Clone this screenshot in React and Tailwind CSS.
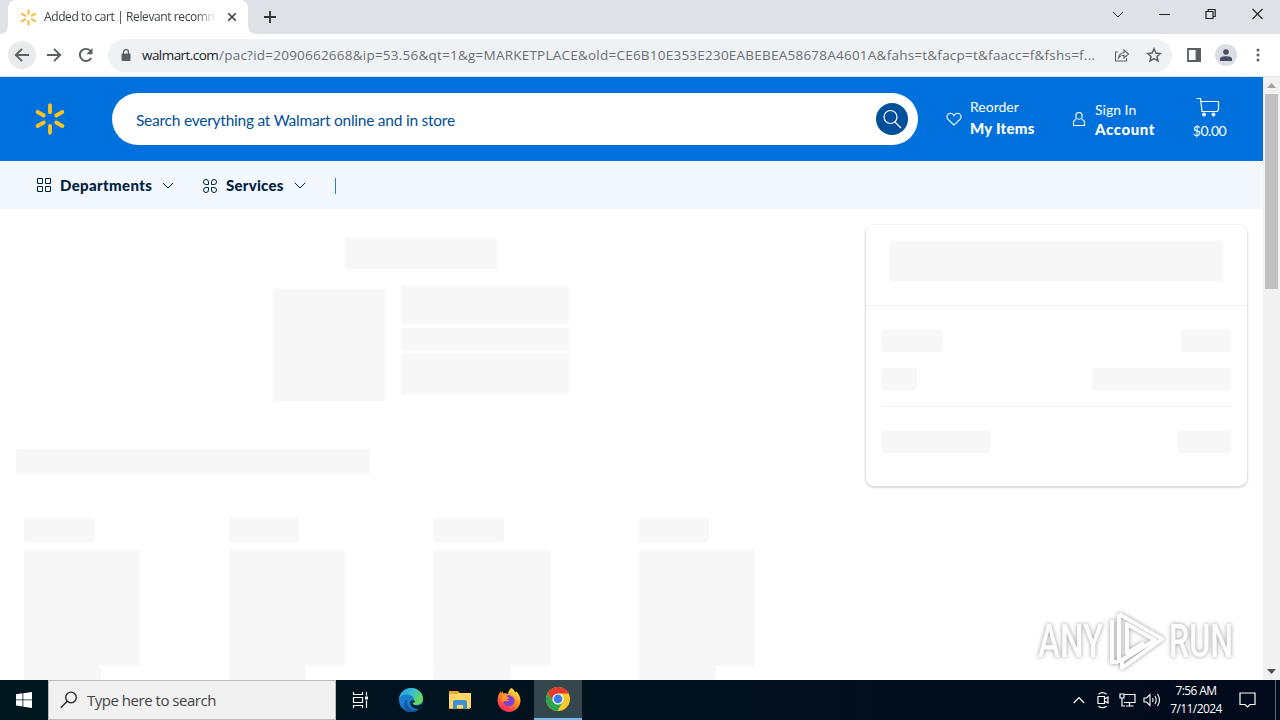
import clsx from "clsx";

const products = [1, 2, 3, 4];

const Skeleton = ({ className }) => <div className={clsx("bg-[#f7f7f7] rounded-[2px] shrink-0", className)} />;

const Spark = ({ size, color, className }) => (
    <svg width={size} height={size} viewBox="0 0 32 32" className={className} stroke={color} strokeWidth="3.8" strokeLinecap="round">
        <path d="M16 2.2v7M16 22.8v7M3.6 9l6.2 3.5M28.4 9l-6.2 3.5M3.6 23l6.2-3.5M28.4 23l-6.2-3.5" />
    </svg>
);

const ChevronDown = ({ className }) => (
    <svg width="12" height="8" viewBox="0 0 12 8" fill="none" stroke="currentColor" className={className}>
        <path d="M1 1l5 5 5-5" />
    </svg>
);

const TabStrip = () => (
    <div className="h-[34px] bg-[#dee1e6] flex shrink-0">
        <div className="flex items-end w-2 bg-white shrink-0">
            <div className="w-2 h-full bg-[#dee1e6] rounded-br-lg" />
        </div>
        <div className="w-60 h-full bg-white rounded-t-lg flex items-center pl-3 shrink-0">
            <Spark size={17} color="#fbb83b" className="shrink-0" />
            <div className="ml-[7px] w-[172px] whitespace-nowrap text-[12px] leading-4 text-[#3c4043] tracking-[-0.4px] mask-r-from-88%">
                Added to cart | Relevant recomm
            </div>
            <svg width="10" height="10" viewBox="0 0 10 10" stroke="#3c4043" strokeWidth="1.6" className="ml-[11px] shrink-0">
                <path d="M1.2 1.2l7.6 7.6M8.8 1.2L1.2 8.8" />
            </svg>
        </div>
        <div className="flex w-2 bg-white shrink-0">
            <div className="w-2 h-full bg-[#dee1e6] rounded-bl-lg" />
        </div>
        <svg width="12" height="12" viewBox="0 0 12 12" stroke="#303336" strokeWidth="1.8" className="mt-[11px] ml-2">
            <path d="M6 0v12M0 6h12" />
        </svg>
        <div className="ml-auto flex pr-[17px] pt-2 text-[#202124]">
            <ChevronDown className="mt-[3px] mr-[35px]" />
            <svg width="11" height="12" viewBox="0 0 11 12" stroke="currentColor" className="mr-[35px]">
                <path d="M0 6.5h11" />
            </svg>
            <svg width="11" height="12" viewBox="0 0 11 12" fill="none" stroke="currentColor" strokeWidth="1.2" className="mr-9">
                <path d="M1 3.5h7v7H1zM3.2 3.5V1.5h7v7H8" />
            </svg>
            <svg width="11" height="12" viewBox="0 0 11 12" stroke="currentColor" strokeWidth="1.1">
                <path d="M.5 1l10 10M10.5 1l-10 10" />
            </svg>
        </div>
    </div>
);

const Toolbar = () => (
    <div className="h-[43px] bg-white flex items-center shrink-0 border-b border-[#dfe3e8] pl-2 text-[#5b5f63]">
        <div className="size-7 rounded-full bg-[#e9eaec] flex items-center justify-center">
            <svg width="16" height="14" viewBox="0 0 16 14" fill="none" stroke="currentColor" strokeWidth="1.9">
                <path d="M15 7H2M8 .8L1.8 7 8 13.2" />
            </svg>
        </div>
        <svg width="16" height="14" viewBox="0 0 16 14" fill="none" stroke="currentColor" strokeWidth="1.9" className="ml-[10px]">
            <path d="M1 7h13M8 .8L14.2 7 8 13.2" />
        </svg>
        <svg width="16" height="16" viewBox="0 0 16 16" fill="none" stroke="currentColor" strokeWidth="1.9" className="ml-4">
            <path d="M13.2 11A6.1 6.1 0 1 1 12.6 4" />
            <path d="M14.5 1v6.2H8.3z" fill="currentColor" stroke="none" />
        </svg>
        <div className="ml-[14px] w-[1064px] h-[33px] rounded-full bg-[#eff2f5] flex items-center pl-[13px]">
            <svg width="10" height="13" viewBox="0 0 10 13" className="shrink-0">
                <rect x="0.5" y="4.5" width="9" height="7.5" rx="1" fill="currentColor" />
                <path d="M2.5 5V3.2a2.5 2.5 0 0 1 5 0V5" fill="none" stroke="currentColor" strokeWidth="1.3" />
            </svg>
            <div className="ml-[11px] w-[960px] whitespace-nowrap text-[13.5px] text-[#6b6f73] flex">
                <span className="text-[#202124] w-[77px] tracking-[-0.55px]">walmart.com</span>
                <span className="tracking-[0.23px]">/pac?id=2090662668&ip=53.56&qt=1&g=MARKETPLACE&old=CE6B10E353E230EABEBEA58678A4601A&fahs=t&facp=t&faacc=f&fshs=f...</span>
            </div>
            <svg width="16" height="16" viewBox="0 0 16 16" fill="none" stroke="currentColor" strokeWidth="1.1" className="ml-3 shrink-0">
                <path d="M4 5H1.5v9h11v-3M4.500 11c.5-3.5 2.5-5.2 5.500-5.300V3l4.500 4L10 11V8.300c-2.300 0-4 .8-5.500 2.700z" />
            </svg>
            <svg width="16" height="16" viewBox="0 0 16 16" fill="none" stroke="currentColor" strokeWidth="1.5" className="ml-4 shrink-0">
                <path d="M8 1.8l1.9 4.2 4.5.5-3.400 3 1 4.500L8 11.700 4 14l1-4.500-3.400-3 4.500-.5z" />
            </svg>
        </div>
        <svg width="14" height="14" viewBox="0 0 14 14" className="ml-[15px]" fill="none" stroke="currentColor" strokeWidth="1.8">
            <path d="M1 1h12v12H1z" />
            <path d="M9.5 1H13v12H9.500z" fill="currentColor" />
        </svg>
        <div className="ml-[14px] size-[22px] rounded-full bg-[#dcdee5] flex items-center justify-center">
            <svg width="12" height="12" viewBox="0 0 12 12" fill="#474d61">
                <circle cx="6" cy="3" r="2.8" />
                <path d="M0 12V9.800C0 6.500 12 6.500 12 9.800V12z" />
            </svg>
        </div>
        <svg width="4" height="14" viewBox="0 0 4 14" fill="currentColor" className="ml-[19px]">
            <circle cx="2" cy="2" r="1.5" />
            <circle cx="2" cy="7" r="1.5" />
            <circle cx="2" cy="12" r="1.5" />
        </svg>
    </div>
);

const Header = () => (
    <header className="h-[84px] bg-[#0071dc] flex items-center shrink-0 pl-[34px] font-[Lato,sans-serif] text-white">
        <Spark size={32} color="#ffc220" />
        <div className="ml-[46px] w-[806px] h-[52px] rounded-full bg-white flex items-center justify-between pl-6 pr-[10px] text-[#004f9a]">
            <span className="text-[15.5px] tracking-[-0.24px] whitespace-nowrap mt-[3px]">Search everything at Walmart online and in store</span>
            <div className="size-8 rounded-full bg-[#004f9a] text-white flex items-center justify-center">
                <svg width="20" height="20" viewBox="0 0 20 20" fill="none" stroke="currentColor" strokeWidth="1.2">
                    <circle cx="8.5" cy="8" r="6.5" />
                    <path d="M13 13l6 6" />
                </svg>
            </div>
        </div>
        <svg width="16" height="14" viewBox="0 0 16 14" fill="none" stroke="currentColor" strokeWidth="1.1" className="ml-7">
            <path d="M8 13L2.3 7.6C-.3 4.800 1.300 1.300 4.200 1.200 6 1.100 7.300 2.200 8 3.500c.7-1.300 2-2.400 3.800-2.300 2.900.1 4.500 3.600 1.900 6.400z" />
        </svg>
        <div className="ml-2 w-[102px] whitespace-nowrap">
            <div className="text-[14px] leading-[22px] -mt-1">Reorder</div>
            <div className="text-[15px] leading-5 font-black tracking-[0.25px]">My Items</div>
        </div>
        <svg width="14" height="16" viewBox="0 0 14 16" fill="none" stroke="currentColor" strokeWidth="1.1">
            <path d="M4 7V4q0-2.500 3-2.500T10 4v3q-1 1.200-3 1.200T4 7zM4 8.500q-2.500.5-2.500 3v3h11v-3q0-2.500-2.500-3" />
        </svg>
        <div className="ml-[9px] w-[96px] whitespace-nowrap">
            <div className="text-[14px] leading-5 -mt-px">Sign In</div>
            <div className="text-[15px] leading-[18px] font-black tracking-[0.6px]">Account</div>
        </div>
        <div className="w-[37px] flex flex-col items-center">
            <svg width="24" height="20" viewBox="0 0 24 20" fill="none" stroke="currentColor" strokeWidth="1.2" className="mr-1">
                <path d="M.5 1.500H4.500L6 14.500H21.500L22.500 12V4.500H5" />
                <circle cx="8" cy="17.500" r="1.300" fill="currentColor" />
                <circle cx="17.5" cy="17.500" r="1.300" fill="currentColor" />
            </svg>
            <div className="text-[14px] leading-5 mt-1 tracking-[-0.5px]">$0.00</div>
        </div>
    </header>
);

const SubNav = () => (
    <nav className="h-12 bg-[#f2f8fd] flex items-center shrink-0 pl-9 pt-px text-[#00203f] font-[Lato,sans-serif] text-[15px] font-black">
        <svg width="16" height="16" viewBox="0 0 16 16" fill="none" stroke="currentColor" className="-mt-px">
            <path d="M1.500 1.500h5v5h-5zM9.500 1.500h5v5h-5zM1.500 9.500h5v5h-5zM9.500 9.500h5v5h-5z" />
        </svg>
        <span className="ml-2 w-[102px] tracking-[0.35px]">Departments</span>
        <ChevronDown />
        <svg width="16" height="16" viewBox="0 0 16 16" fill="none" stroke="currentColor" className="ml-7">
            <path d="M6.500 6.500H4a2.500 2.500 0 1 1 2.500-2.500zM9.500 6.500V4A2.500 2.500 0 1 1 12 6.500zM6.500 9.500V12A2.500 2.500 0 1 1 4 9.500zM9.500 9.500H12A2.500 2.500 0 1 1 9.500 12z" />
        </svg>
        <span className="ml-2 w-[68px] tracking-[0.25px]">Services</span>
        <ChevronDown />
        <div className="ml-[29px] w-px h-4 mt-px bg-[#2a7fbf]" />
    </nav>
);

const ProductSkeleton = () => (
    <div className="w-[205px]">
        <Skeleton className="w-[70px] h-6" />
        <Skeleton className="w-[116px] h-[116px] mt-2" />
        <Skeleton className="w-[77px] h-6" />
    </div>
);

const OrderSummary = () => (
    <div className="w-[381px] h-[261px] mt-4 rounded-lg bg-white shrink-0 shadow-[0_1px_2px_1px_rgba(0,0,0,0.15)]">
        <div className="h-[81px] pt-4 pl-6 border-b border-[#efefef]">
            <Skeleton className="w-[333px] h-10" />
        </div>
        <div className="px-4 pt-6">
            <div className="flex justify-between">
                <Skeleton className="w-[60px] h-[22px]" />
                <Skeleton className="w-[50px] h-[22px]" />
            </div>
            <div className="flex justify-between mt-4 pb-4 border-b border-[#efefef]">
                <Skeleton className="w-[35px] h-[22px]" />
                <Skeleton className="w-[139px] h-[22px]" />
            </div>
            <div className="flex justify-between mt-6">
                <Skeleton className="w-[108px] h-[22px]" />
                <Skeleton className="w-[53px] h-[22px]" />
            </div>
        </div>
    </div>
);

const Watermark = () => (
    <div className="absolute left-[1038px] top-[609px] w-[200px] h-[64px] flex items-center text-[#fdfdfd] font-[Roboto,sans-serif] text-[46px] leading-[64px] font-medium drop-shadow-[0_0_2px_rgba(0,0,0,0.4)]">
        <div className="w-[69px]">
            <div className="origin-left scale-x-[0.72]">ANY</div>
        </div>
        <svg width="62" height="64" viewBox="0 0 62 64" fill="none" stroke="currentColor" strokeWidth="4" strokeLinejoin="round">
            <path d="M5 11v42h6M12 5v49M12 5l43 25L15 59V51l33-20L20 15v29l17-10" />
        </svg>
        <div className="w-[62px]">
            <div className="origin-left scale-x-[0.7] w-[92px]">RUN</div>
        </div>
    </div>
);

const Scrollbar = () => (
    <div className="w-[17px] bg-[#f1f1f1] shrink-0 flex flex-col items-center">
        <svg width="9" height="17" viewBox="0 0 9 17">
            <path d="M0 11l4.500-5L9 11z" fill="#a3a3a3" />
        </svg>
        <div className="w-[13px] h-[195px] bg-[#c1c1c1]" />
        <svg width="9" height="17" viewBox="0 0 9 17" className="mt-auto">
            <path d="M0 6l4.500 5L9 6z" fill="#505050" />
        </svg>
    </div>
);

const Edge = () => (
    <svg width="24" height="24" viewBox="0 0 24 24">
        <defs>
            <linearGradient id="edgeTop" x1="0" y1="0" x2="1" y2="0.5">
                <stop offset="0" stopColor="#2294df" />
                <stop offset="0.5" stopColor="#35bdd4" />
                <stop offset="1" stopColor="#68d956" />
            </linearGradient>
        </defs>
        <circle cx="12" cy="12" r="12" fill="#1680cf" />
        <path d="M0 11C1 4 6 0 12 0c7 0 12 5 12 10.500 0 4.500-3.500 6.300-6.700 6.300-2.300 0-3.800-.8-3.800-1.800 0-.8 1.500-1.500 1.500-3.500C15 8.500 11.500 6.500 7.500 6.500 4 6.500 1.500 8.200 0 11z" fill="url(#edgeTop)" />
        <path d="M8.500 11.500C6.500 18 12 23 19 21.700 16 24 12 24.500 9 23.600 3 21 3.500 13 8.500 11.500z" fill="#1555a3" />
        <path d="M13.500 14.500c-.8 3 4.500 4.200 8.500 1.800 1.500-.8 2.500-.5 2 .7-.5 2-1.500 3-3 4-6 1-11-3-9.500-7.500 1.200-1.500 4.500-1 4.500 0 0 1-.9 1-2.500 1z" fill="#03202d" />
    </svg>
);

const Folder = () => (
    <svg width="22" height="20" viewBox="0 0 22 20">
        <path d="M0 1h9l2 2h10v16H0z" fill="#e8a92e" />
        <path d="M0 4h8l2-1h12v15H0z" fill="#ffd766" />
        <path d="M4 19v-7q0-2 2-2h10q2 0 2 2v7h-4v-4H8v4z" fill="#3d92d1" />
    </svg>
);

const Firefox = () => (
    <svg width="24" height="24" viewBox="0 0 24 24">
        <defs>
            <linearGradient id="fox" x1="0.8" y1="0" x2="0.2" y2="1">
                <stop offset="0" stopColor="#fff04a" />
                <stop offset="0.45" stopColor="#ff8f1f" />
                <stop offset="1" stopColor="#f5156c" />
            </linearGradient>
        </defs>
        <path d="M14.500 0c2 1 3.200 3 3.500 4.500l1.500-1C22 6 23.500 9 23.500 12.500 23.500 19 18 24 12 24S.5 19 .5 12.500C.5 8 2 5.500 4 3v2.500l2-2.500v2.500c2-.8 4 0 5 .5.5-3 1.500-5 3.500-6z" fill="url(#fox)" />
        <path d="M9 8c4-2 9 1 8.500 5.500-.5 4-4.500 5.500-7.500 4.500-3-1-4.500-4-3-6 1 1.500 3 2 5.500.5-1.500-.5-3-1-4-2.500z" fill="#7b40d8" />
        <path d="M5 8c2.500-1 5 0 7 2-1 1.500-3 1-4 3l-3 1z" fill="#ff9a20" />
    </svg>
);

const Chrome = () => (
    <svg width="24" height="24" viewBox="0 0 24 24">
        <circle cx="12" cy="12" r="12" fill="#fcc92b" />
        <path d="M12 6.500h10.700A12 12 0 0 0 1.600 6l5.600 9z" fill="#e33b2e" />
        <path d="M1.600 6A12 12 0 0 0 11.500 24l5.300-9.200L12 17.500 7.200 14.800z" fill="#2da44e" />
        <circle cx="12" cy="12" r="5.6" fill="#fff" />
        <circle cx="12" cy="12" r="4.4" fill="#367de8" />
    </svg>
);

const Taskbar = () => (
    <div className="h-10 shrink-0 bg-linear-to-r from-[#001820] to-[#020a1c] flex items-center text-white">
        <div className="w-12 flex justify-center">
            <svg width="16" height="16" viewBox="0 0 16 16" fill="white">
                <path d="M0 2.300L6.500 1.300v6.200H0zM7.300 1.200L16 0v7.500H7.300zM0 8.300h6.500v6.200L0 13.600zM7.300 8.300H16V16l-8.700-1.300z" />
            </svg>
        </div>
        <div className="w-72 h-full bg-[#f1f1f1] border border-[#b9bcbe] flex items-center pl-[11px] text-[#444]">
            <svg width="18" height="18" viewBox="0 0 18 18" fill="none" stroke="#222" strokeWidth="1.3">
                <circle cx="11" cy="6.5" r="5.3" />
                <path d="M7.200 10.300L.8 16.700" />
            </svg>
            <span className="ml-[9px] text-[15px] tracking-[-0.48px]">Type here to search</span>
        </div>
        <div className="w-12 flex justify-center">
            <svg width="17" height="16" viewBox="0 0 17 16" fill="none" stroke="white" strokeWidth="1.2">
                <path d="M1.500 0v2.500h9V0M1.500 16v-2.500h9V16M1.500 5.500h9v5h-9zM14.500 0v3.500M14.500 8.500V16" />
                <path d="M13 4.500h3v3h-3z" fill="white" stroke="none" />
            </svg>
        </div>
        <div className="w-[54px] flex justify-center"><Edge /></div>
        <div className="w-11 flex justify-center"><Folder /></div>
        <div className="w-[54px] flex justify-center"><Firefox /></div>
        <div className="-ml-0.5 w-12 h-full bg-[#35474e] border-b-2 border-[#76b9ed] flex items-center justify-center"><Chrome /></div>
        <div className="ml-auto flex items-center">
            <svg width="12" height="8" viewBox="0 0 12 8" fill="none" stroke="white" strokeWidth="1.2">
                <path d="M.8 7L6 1.500 11.200 7" />
            </svg>
            <svg width="12" height="18" viewBox="0 0 12 18" fill="none" stroke="white" strokeWidth="1.2" className="ml-3">
                <path d="M1 5.500h6.500v7H1zM7.500 8L11 6v6L7.500 10M1.500 3.200q4-3 8 0M1.500 15.200q4 3 8 0" />
            </svg>
            <svg width="17" height="14" viewBox="0 0 17 14" fill="none" stroke="white" strokeWidth="1.2" className="ml-[10px]">
                <path d="M5 1.500h11v8H5M10.500 9.500V13M7 13h7.500M1 1h4v4H1zM3 5v8h3" />
            </svg>
            <svg width="18" height="14" viewBox="0 0 18 14" fill="none" stroke="white" strokeWidth="1.1" className="ml-[7px]">
                <path d="M1 5h2.500L7 1.500v11L3.500 9H1zM9.500 5q1.200 2 0 4M12 3q2.500 4 0 8M14.500 1q4 6 0 12" />
            </svg>
            <div className="w-[70px] text-center text-[12px] leading-[18px] tracking-[-0.6px]">
                <div>7:56 AM</div>
                <div>7/11/2024</div>
            </div>
            <svg width="17" height="16" viewBox="0 0 17 16" fill="none" stroke="white" strokeWidth="1.2" className="ml-2">
                <path d="M1 1h15v11.500h-5L8.500 15 6 12.500H1z" />
            </svg>
            <div className="ml-[19px] w-px h-10 bg-[#5a6270] mr-1" />
        </div>
    </div>
);

export default function App() {
    return (
        <div className="relative w-[1280px] h-[720px] overflow-hidden bg-white flex flex-col font-['Open_Sans',sans-serif]">
            <TabStrip />
            <Toolbar />
            <div className="flex h-[603px] overflow-hidden">
                <div className="w-[1263px] flex flex-col">
                    <Header />
                    <SubNav />
                    <main className="flex">
                        <div className="w-[866px] shrink-0 pt-[29px]">
                            <Skeleton className="ml-[345px] w-[152px] h-[31px]" />
                            <div className="ml-[273px] mt-[17px] flex gap-4">
                                <Skeleton className="size-28 mt-[3px]" />
                                <div className="space-y-1">
                                    <Skeleton className="w-[168px] h-[38px]" />
                                    <Skeleton className="w-[168px] h-[22px]" />
                                    <Skeleton className="w-[168px] h-10" />
                                </div>
                            </div>
                            <Skeleton className="ml-4 mt-12 w-[354px] h-[25px]" />
                            <div className="flex pl-6 mt-11">
                                {products.map((id) => (
                                    <ProductSkeleton key={id} />
                                ))}
                            </div>
                        </div>
                        <OrderSummary />
                    </main>
                </div>
                <Scrollbar />
            </div>
            <Taskbar />
            <Watermark />
        </div>
    );
}
